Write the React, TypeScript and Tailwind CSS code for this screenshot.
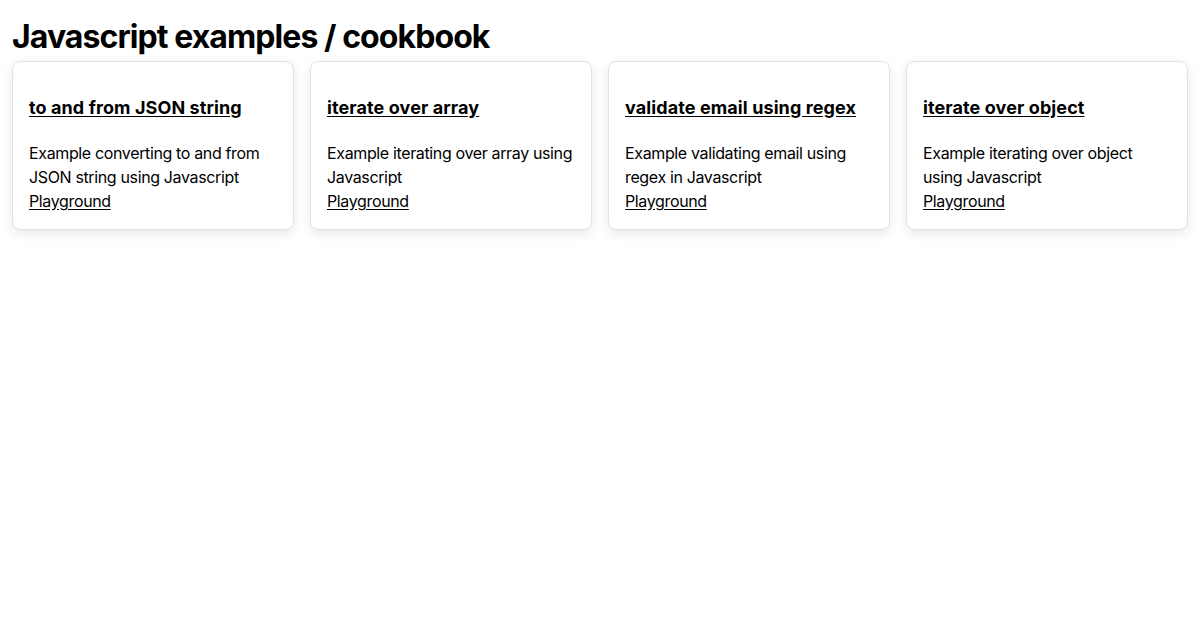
const examples = [
  {
    title: "to and from JSON string",
    description: "Example converting to and from JSON string using Javascript",
  },
  {
    title: "iterate over array",
    description: "Example iterating over array using Javascript",
  },
  {
    title: "validate email using regex",
    description: "Example validating email using regex in Javascript",
  },
  {
    title: "iterate over object",
    description: "Example iterating over object using Javascript",
  },
];

function ExampleCard({ title, description }: { title: string; description: string }) {
  return (
    <div className="rounded-lg border border-[#e2e2e6] bg-white p-4 shadow-[0_4px_12px_rgba(0,0,0,0.09)]">
      <h3 className="mt-[19px] text-[18px] font-bold leading-[22px] tracking-[0.1px]">
        <a href="#" className="underline underline-offset-2">
          {title}
        </a>
      </h3>
      <p className="mt-[22px] text-base leading-6 tracking-[-0.36px]">{description}</p>
      <a
        href="#"
        className="block text-base leading-6 tracking-[-0.36px] underline underline-offset-2"
      >
        Playground
      </a>
    </div>
  );
}

export default function App() {
  return (
    <div
      className="min-h-[630px] bg-white px-3 text-black"
      style={{ fontFamily: "Inter, 'Liberation Sans', sans-serif" }}
    >
      <h1 className="pt-[17px] text-[32px] font-bold leading-10 tracking-[-0.92px]">
        Javascript examples / cookbook
      </h1>
      <div className="mt-1 grid grid-cols-4 gap-4">
        {examples.map((e) => (
          <ExampleCard key={e.title} title={e.title} description={e.description} />
        ))}
      </div>
    </div>
  );
}
